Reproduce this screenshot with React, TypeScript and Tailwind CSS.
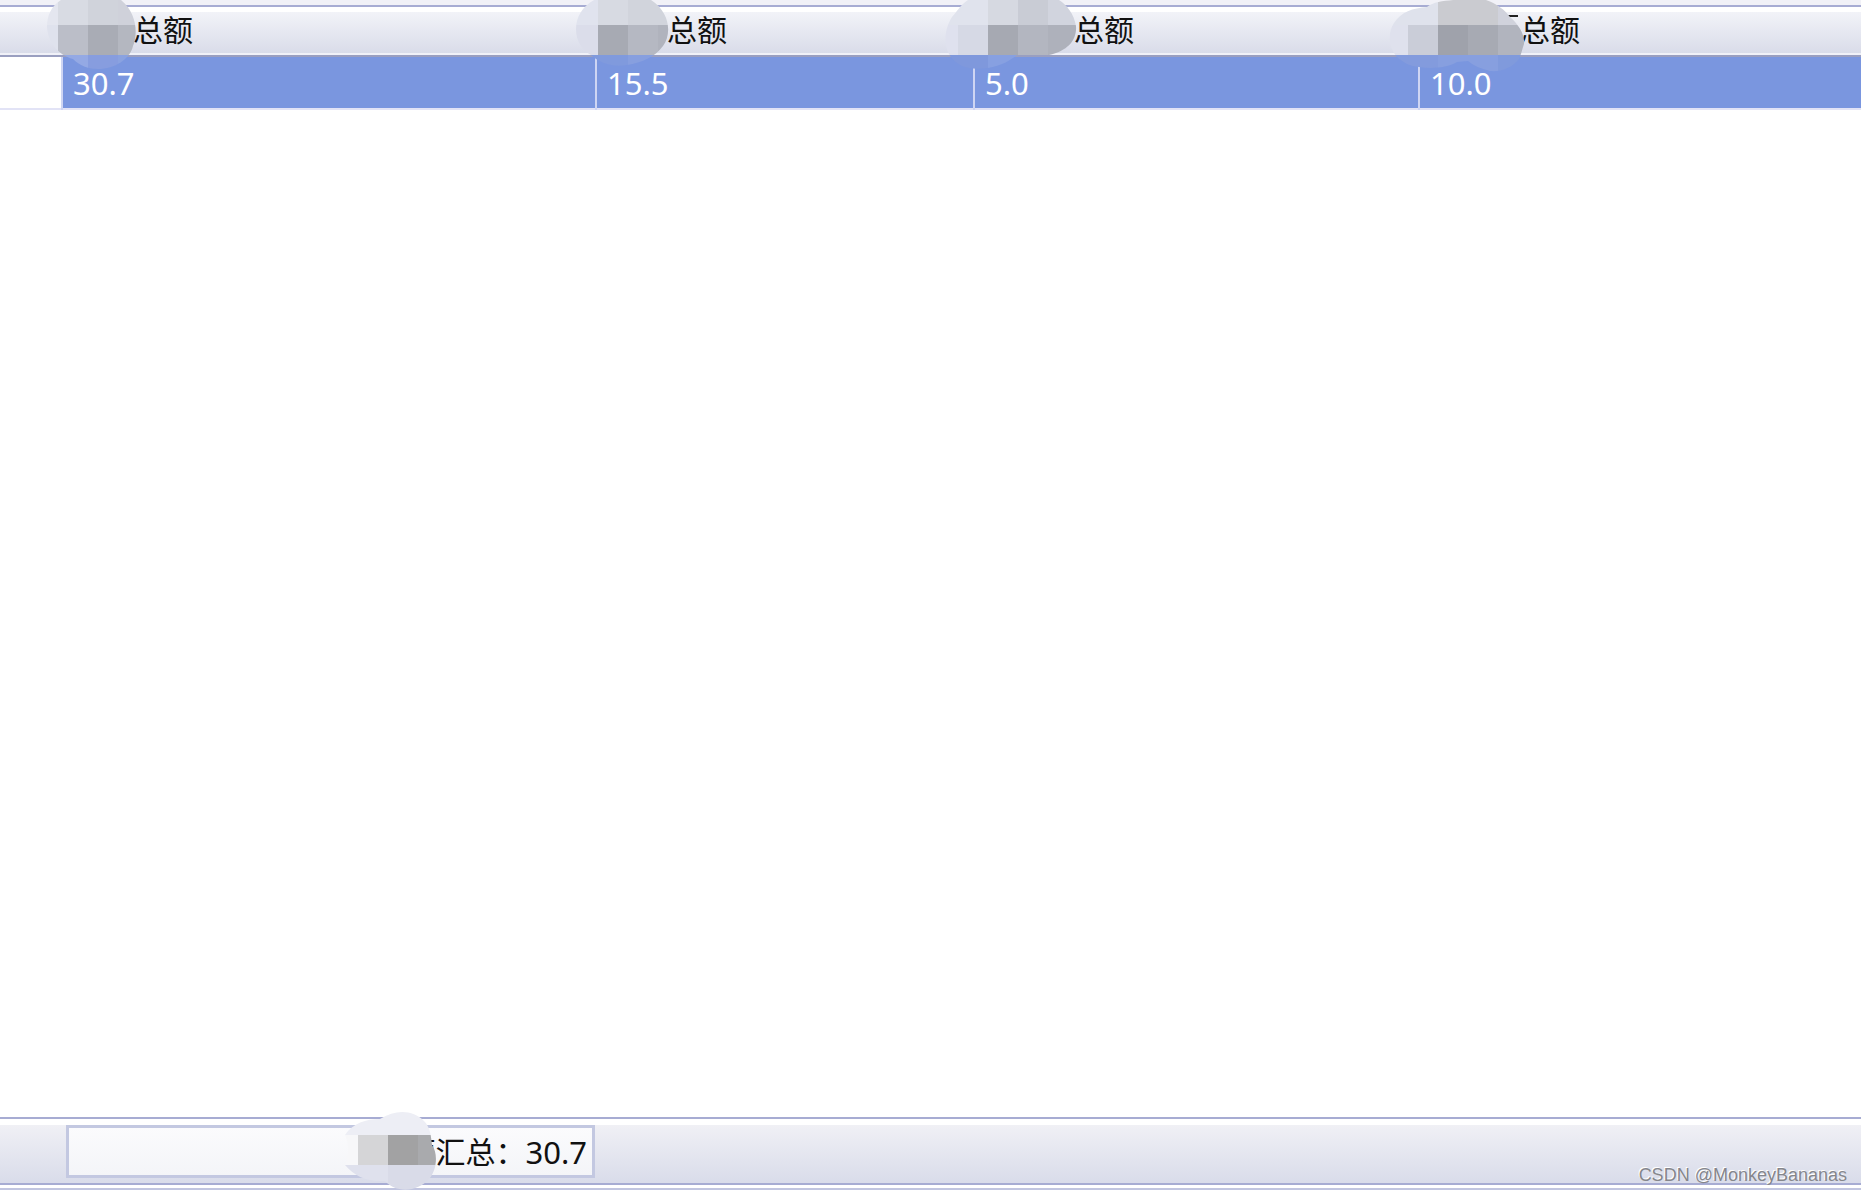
import React from 'react';

type Tile = [x: number, y: number, w: number, h: number, fill: string];

type SmudgeProps = {
  id: string;
  className: string;
  viewBox: string;
  shape: string;
  tiles: Tile[];
  children?: React.ReactNode;
};

// Pixelated patch that hides the private part of a label
const Smudge = ({ id, className, viewBox, shape, tiles, children }: SmudgeProps) => {
  return (
    <svg className={className} viewBox={viewBox} aria-hidden="true" shapeRendering="crispEdges">
      <clipPath id={id}>
        <path d={shape} />
      </clipPath>
      {children}
      <g clipPath={`url(#${id})`}>
        {tiles.map(([x, y, w, h, fill]) => (
          <rect key={`${x}-${y}`} x={x} y={y} width={w} height={h} fill={fill} />
        ))}
      </g>
    </svg>
  );
};

const columns = [
  {
    id: 'total',
    value: '30.7',
    width: 'w-[534px]',
    pad: 'pl-[71px]',
    smudge: 'absolute -left-4 -top-3 w-[92px] h-[72px]',
    viewBox: '46 0 92 72',
    shape: 'M61 0 C51 6 47 16 47 27 C48 42 58 55 73 59 C80 66 89 69 98 69 C115 69 130 59 133 46 C138 34 137 13 121 0 Z',
    tiles: [
      [46, 0, 12, 25, '#e4e6ef'], [58, 0, 30, 25, '#d8dbe3'], [88, 0, 30, 25, '#d0d3db'], [118, 0, 20, 25, '#cfd1da'],
      [46, 25, 12, 30, '#dfe2ed'], [58, 25, 30, 30, '#bbbec8'], [88, 25, 30, 30, '#a9acb5'], [118, 25, 20, 30, '#b4b7c0'],
      [46, 55, 42, 17, '#94a9e4'], [88, 55, 30, 17, '#879ddf'], [118, 55, 20, 17, '#8aa2e0'],
    ] as Tile[],
  },
  {
    id: 'second',
    value: '15.5',
    width: 'w-[378px]',
    pad: 'pl-[71px]',
    smudge: 'absolute -left-5 -top-3 w-[96px] h-[72px]',
    viewBox: '576 0 96 72',
    shape: 'M594 0 C582 7 576 17 576 29 C576 41 582 50 591 55 C602 65 615 67 627 65 C642 63 656 56 663 46 C672 34 670 12 651 0 Z',
    tiles: [
      [576, 0, 22, 25, '#e0e3ee'], [598, 0, 30, 25, '#d7dae2'], [628, 0, 44, 25, '#d1d4dc'],
      [576, 25, 22, 30, '#dbddea'], [598, 25, 30, 30, '#a7aab3'], [628, 25, 30, 30, '#b5b8c2'], [658, 25, 14, 30, '#b0b3bd'],
      [576, 55, 52, 17, '#809add'], [628, 55, 44, 17, '#879fdf'],
    ] as Tile[],
  },
  {
    id: 'third',
    value: '5.0',
    width: 'w-[445px]',
    pad: 'pl-[100px]',
    smudge: 'absolute -left-[30px] -top-3 w-[134px] h-[72px]',
    viewBox: '944 0 134 72',
    shape: 'M968 0 C959 6 957 12 952 17 C945 28 943 43 949 54 C958 69 973 70 988 68 C1001 66 1011 60 1017 55 L1049 55 C1068 51 1077 40 1076 26 C1074 14 1067 5 1059 0 Z',
    tiles: [
      [944, 0, 44, 25, '#e0e3ed'], [988, 0, 30, 25, '#d6d9e1'], [1018, 0, 30, 25, '#c9ccd5'], [1048, 0, 30, 25, '#d1d4de'],
      [944, 25, 14, 30, '#dfe1ee'], [958, 25, 30, 30, '#d6d9e5'], [988, 25, 30, 30, '#a6a9b2'], [1018, 25, 30, 30, '#b3b6c0'], [1048, 25, 30, 30, '#aeb1bb'],
      [944, 55, 44, 17, '#7f98dc'], [988, 55, 90, 17, '#87a0e1'],
    ] as Tile[],
  },
  {
    id: 'fourth',
    value: '10.0',
    width: '',
    pad: 'pl-[101px]',
    smudge: 'absolute -left-[30px] -top-3 w-[136px] h-[72px]',
    viewBox: '1389 0 136 72',
    shape: 'M1427 7 C1433 2 1443 1 1453 0 L1486 0 C1497 4 1505 10 1510 17 C1519 25 1525 35 1524 44 C1522 50 1521 55 1519 59 C1512 68 1501 72 1490 71 C1482 69 1474 66 1468 61 L1457 62 C1447 68 1431 69 1419 67 C1409 66 1402 62 1396 56 C1388 46 1388 32 1394 23 C1401 12 1413 8 1427 7 Z',
    tiles: [
      [1389, 0, 49, 25, '#dfe2ec'], [1438, 0, 60, 25, '#cacbd0'], [1498, 0, 27, 25, '#d0d2dc'],
      [1389, 25, 19, 30, '#dfe1ed'], [1408, 25, 30, 30, '#cacdd8'], [1438, 25, 30, 30, '#9fa2ab'], [1468, 25, 30, 30, '#a7aab3'], [1498, 25, 27, 30, '#b1b4be'],
      [1389, 55, 49, 17, '#839bdd'], [1438, 55, 60, 17, '#879fdf'], [1498, 55, 27, 17, '#809adc'],
    ] as Tile[],
  },
];

const footerTiles: Tile[] = [
  [344, 1112, 100, 23, '#edeef5'],
  [344, 1135, 14, 30, '#f7f7f9'], [358, 1135, 30, 30, '#d5d5d7'], [388, 1135, 30, 30, '#a2a2a3'], [418, 1135, 26, 30, '#a9aaad'],
  [344, 1165, 44, 25, '#dfe1ed'], [388, 1165, 56, 25, '#d9dbe8'],
];

const App = () => {
  return (
    <div className="min-h-screen flex flex-col overflow-hidden bg-white font-['Noto_Sans','Noto_Sans_CJK_SC',sans-serif] text-[#111111]">
      <div className="h-[7px] shrink-0 bg-[#f1f1f7] border-b-2 border-[#a7acd3]" />
      <main className="flex-1 pt-[5px]">
        <table className="w-full table-fixed border-collapse">
          <thead>
            <tr className="h-[45px] bg-linear-to-b from-[#f2f3f8] to-[#d7dae8] shadow-[inset_0_-2px_0_#9a9fc0,inset_0_-4px_0_#f0f1f8]">
              <th className="w-[62px] p-0" />
              {columns.map((col) => (
                <th
                  key={col.id}
                  scope="col"
                  className={`relative pt-0 pr-0 pb-[10px] text-left font-normal text-[30px] leading-8 ${col.width} ${col.pad}`}
                >
                  总额
                  <Smudge id={col.id} className={col.smudge} viewBox={col.viewBox} shape={col.shape} tiles={col.tiles}>
                    {col.id === 'fourth' && <rect x={1506} y={15} width={12} height={2} fill="#222222" />}
                  </Smudge>
                </th>
              ))}
            </tr>
          </thead>
          <tbody>
            <tr className="h-[52px] border-b-2 border-[#e2e3f6]">
              <td className="p-0" />
              {columns.map((col) => (
                <td
                  key={col.id}
                  className="border-l-2 border-[#ced5f3] bg-[#7a96df] py-0 pl-[10px] pr-0 text-[31px] leading-10 text-white"
                >
                  {col.value}
                </td>
              ))}
            </tr>
          </tbody>
        </table>
      </main>

      <footer className="shrink-0 pb-1">
        <div className="border-y-2 border-[#a7acd3] pt-[6px]">
          <div className="flex h-[58px] bg-linear-to-b from-[#f0f0f5] to-[#d9dcea] pl-[66px]">
            <div className="relative flex h-[53px] w-[529px] items-center justify-end border-[3px] border-[#c3c8e1] bg-linear-to-b from-[#fbfbfd] to-[#f4f5f8] pr-[5px]">
              <span className="text-[30px] leading-10">额汇总：</span>
              <span className="text-[31px] leading-10">30.7</span>
              <Smudge
                id="summary"
                className="absolute left-[275px] -top-[16px] w-[100px] h-[78px]"
                viewBox="344 1112 100 78"
                shape="M380 1119 C396 1109 413 1110 424 1121 C430 1127 431 1135 432 1145 C438 1153 437 1169 430 1178 C417 1193 396 1193 385 1181 C367 1182 354 1176 345 1165 C349 1155 349 1144 345 1135 C353 1123 366 1119 380 1119 Z"
                tiles={footerTiles}
              />
            </div>
            <p className="relative ml-auto mr-[14px] self-end font-['Liberation_Sans',sans-serif] text-[18px] leading-4 text-[#85868c] [text-shadow:-1px_-1px_0_#ffffff]">
              CSDN @MonkeyBananas
            </p>
          </div>
        </div>
        <div className="mt-[3px] h-[2px] bg-[#c1c5e0]" />
      </footer>
    </div>
  );
};

export default App;
